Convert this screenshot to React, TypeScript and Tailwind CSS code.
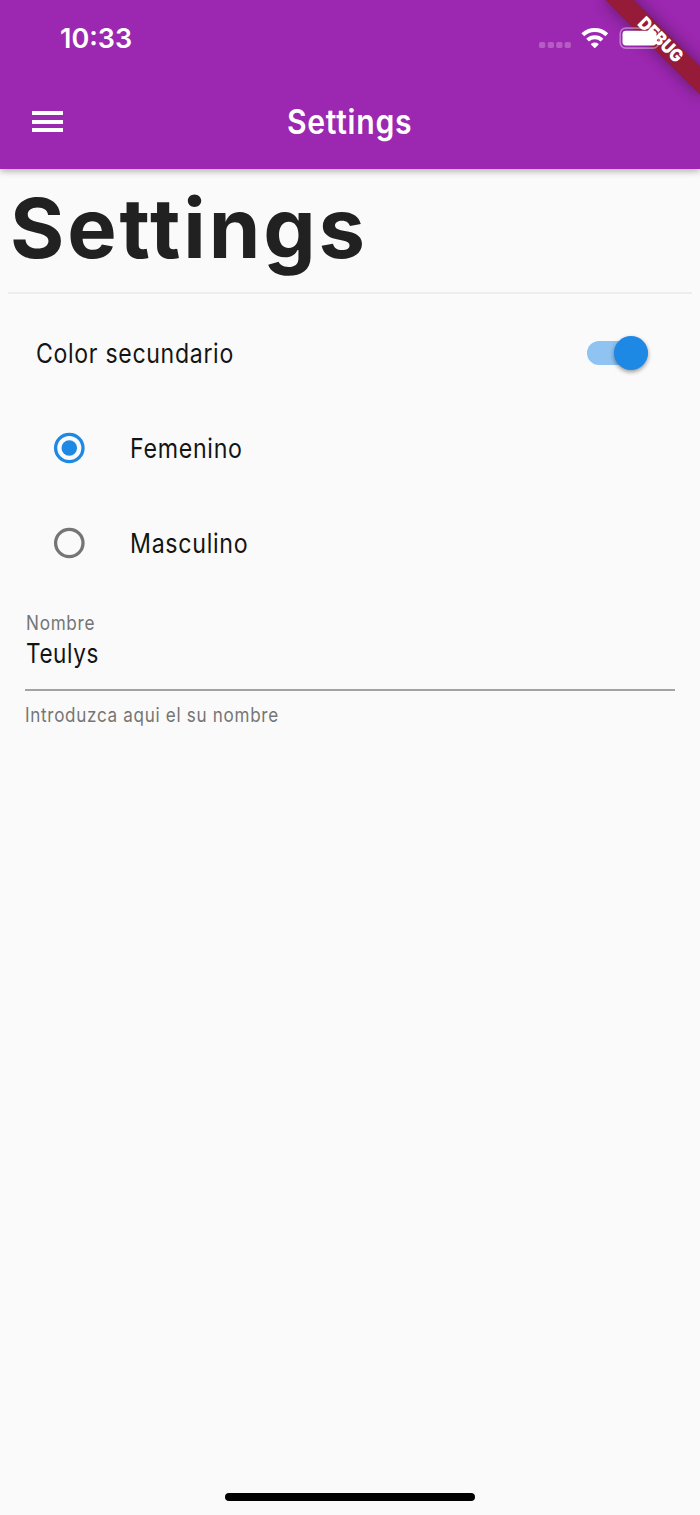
import type { ReactNode } from "react";

function Label({ className, children }: { className: string; children: ReactNode }) {
  return <span className={`inline-block origin-left whitespace-pre ${className}`}>{children}</span>;
}

function Radio({ label, checked }: { label: string; checked: boolean }) {
  return (
    <label className="flex h-[94.7px] items-center pl-[53px]">
      <svg className="size-[32px] shrink-0" viewBox="0 0 32 32" fill="none">
        <circle cx="16.3" cy="16" r="13.7" stroke={checked ? "#1e88e5" : "#757575"} strokeWidth="3.3" />
        {checked && <circle cx="16.3" cy="16" r="7.8" fill="#1e88e5" />}
      </svg>
      <Label className="ml-[45px] scale-x-[0.875] text-[26.5px] leading-8 tracking-[0.8px] text-[#141414]">{label}</Label>
    </label>
  );
}

function StatusBar() {
  return (
    <div className="flex h-[75px] items-start">
      <div className="ml-[60px] mt-[23px] text-[27px] font-semibold leading-8">10:33</div>
      <svg className="ml-auto mr-[30px] mt-[20px] h-[36px] w-[132px]" viewBox="538 20 132 36">
        <g fill="#fff" fillOpacity=".25">
          <rect x="539" y="42" width="6.3" height="6" rx="1.7" />
          <rect x="547.7" y="42" width="6.3" height="6" rx="1.7" />
          <rect x="556.2" y="42" width="6.3" height="6" rx="1.7" />
          <rect x="564.6" y="42" width="6.3" height="6" rx="1.7" />
        </g>
        <g fill="none" stroke="#fff" strokeWidth="4">
          <path d="M582.8 34.8a17.3 17.3 0 0 1 24 0" />
          <path d="M587.6 40.1a10.4 10.4 0 0 1 14.4 0" />
        </g>
        <path d="M591.2 43.8a5.8 5.8 0 0 1 7.2 0q.5.5 0 1L595.4 47.8q-.6.5-1.2 0L591.2 44.8q-.4-.5 0-1Z" fill="#fff" />
        <rect x="620.2" y="28.1" width="38.5" height="20" rx="5.5" fill="none" stroke="#fff" strokeOpacity=".38" strokeWidth="1.6" />
        <rect x="622.5" y="30.8" width="34" height="14.6" rx="3.4" fill="#fff" />
      </svg>
    </div>
  );
}

export default function App() {
  return (
    <div className="relative flex h-[1515px] w-[700px] flex-col overflow-hidden bg-[#fafafa] font-['Inter',sans-serif]">
      <header className="h-[169px] shrink-0 bg-[#9c27b0] text-white shadow-[0_2px_7px_rgba(0,0,0,0.32)]">
        <div className="relative z-20">
          <StatusBar />
        </div>
        <div className="grid h-[93px] grid-cols-[1fr_auto_1fr] items-center">
          <button className="ml-8 flex w-[31px] flex-col gap-[4.5px]" aria-label="Menu">
            <span className="h-[4px] bg-white" />
            <span className="h-[4px] bg-white" />
            <span className="h-[4px] bg-white" />
          </button>
          <span className="scale-x-[0.9] text-[33.5px] font-semibold leading-10 tracking-[0.8px]">Settings</span>
        </div>
      </header>

      <div className="absolute left-[591.8px] top-[30.4px] z-10 h-[20.3px] w-[135.2px] rotate-45 bg-[#951b38] shadow-[0_0_16px_rgba(0,0,0,0.4)]" />
      <div className="absolute left-[592.6px] top-[30.4px] z-30 flex h-[20.3px] w-[135.2px] rotate-45 items-center justify-center text-[18px] font-black leading-none text-white">
        <span className="scale-x-[0.88]">DEBUG</span>
      </div>

      <main className="flex flex-col">
        <h1 className="mx-[8px] h-[124.5px] border-b-2 border-[#ededed] pl-[2px] text-[83px] font-bold leading-[118px] text-[#212121]">
          <Label className="tracking-[2.9px]">Settings</Label>
        </h1>
        <div className="flex h-[107.5px] items-center justify-between pb-px pl-9 pr-[52.5px] pt-[12px]">
          <Label className="scale-x-[0.87] text-[26.5px] leading-8 tracking-[0.8px] text-[#141414]">Color secundario</Label>
          <div className="flex h-[24px] w-[61px] items-center justify-end rounded-full bg-[#8ec3f2]">
            <span className="size-[34px] shrink-0 rounded-full bg-[#1e88e5] shadow-[0_2px_4px_rgba(0,0,0,0.4)]" />
          </div>
        </div>
        <Radio label="Femenino" checked />
        <Radio label="Masculino" checked={false} />
        <div className="mx-[25px] flex h-[100.5px] flex-col items-start border-b-2 border-[#a3a3a3] pl-px pt-[20.5px]">
          <Label className="scale-x-[0.88] text-[19.5px] leading-6 tracking-[0.8px] text-[#757575]">Nombre</Label>
          <Label className="mt-[2px] scale-x-[0.85] text-[26.5px] leading-8 tracking-[0.7px] text-[#141414]">Teulys</Label>
        </div>
        <p className="mx-[25px] mt-[12px]">
          <Label className="scale-x-[0.875] text-[19.5px] leading-6 tracking-[0.8px] text-[#757575]">Introduzca aqui el su nombre</Label>
        </p>
      </main>
      <div className="mx-auto mb-[14px] mt-auto h-[8px] w-[250px] rounded-full bg-black" />
    </div>
  );
}
